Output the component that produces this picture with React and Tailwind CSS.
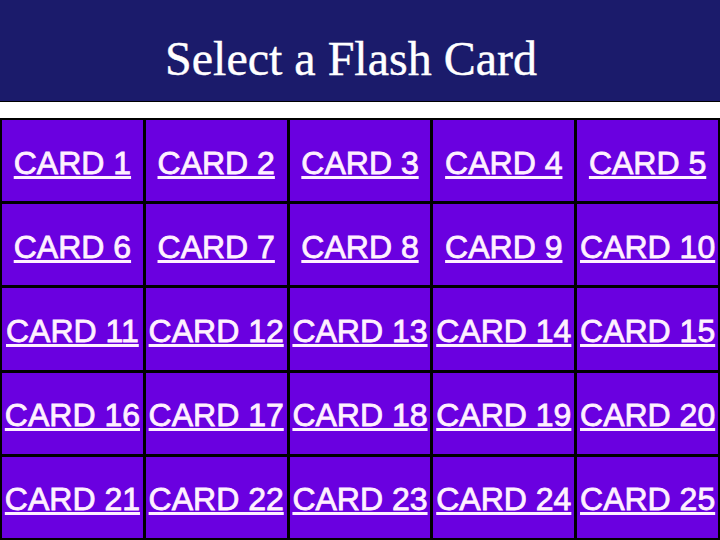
const cards = Array.from({ length: 25 }, (_, i) => `CARD ${i + 1}`);

const App = () => {
  return (
    <div className="w-[720px] h-[540px] overflow-hidden bg-white">
      <div className="h-[101px] bg-[#1b1b6b] flex justify-center pr-[18px]">
        <h1 className="mt-[35px] text-[48px] leading-[48px] text-white font-['Liberation_Serif',serif] font-normal [-webkit-text-stroke:0.4px_#ffffff]">
          Select a Flash Card
        </h1>
      </div>
      <div className="h-[17px] bg-white border-t border-black" />
      <div className="h-[422px] bg-black p-[2px] grid grid-cols-5 grid-rows-5 gap-[3px]">
        {cards.map((card) => (
          <div
            key={card}
            className="bg-[#6a00e0] flex items-center justify-center pt-[4px]"
          >
            <a
              href="#"
              className="text-[32px] leading-[32px] text-[#fff0ff] underline decoration-[2.5px] whitespace-nowrap font-['Liberation_Sans',Arial,sans-serif] [-webkit-text-stroke:0.8px_#fff0ff]"
            >
              {card}
            </a>
          </div>
        ))}
      </div>
    </div>
  );
};

export default App;
